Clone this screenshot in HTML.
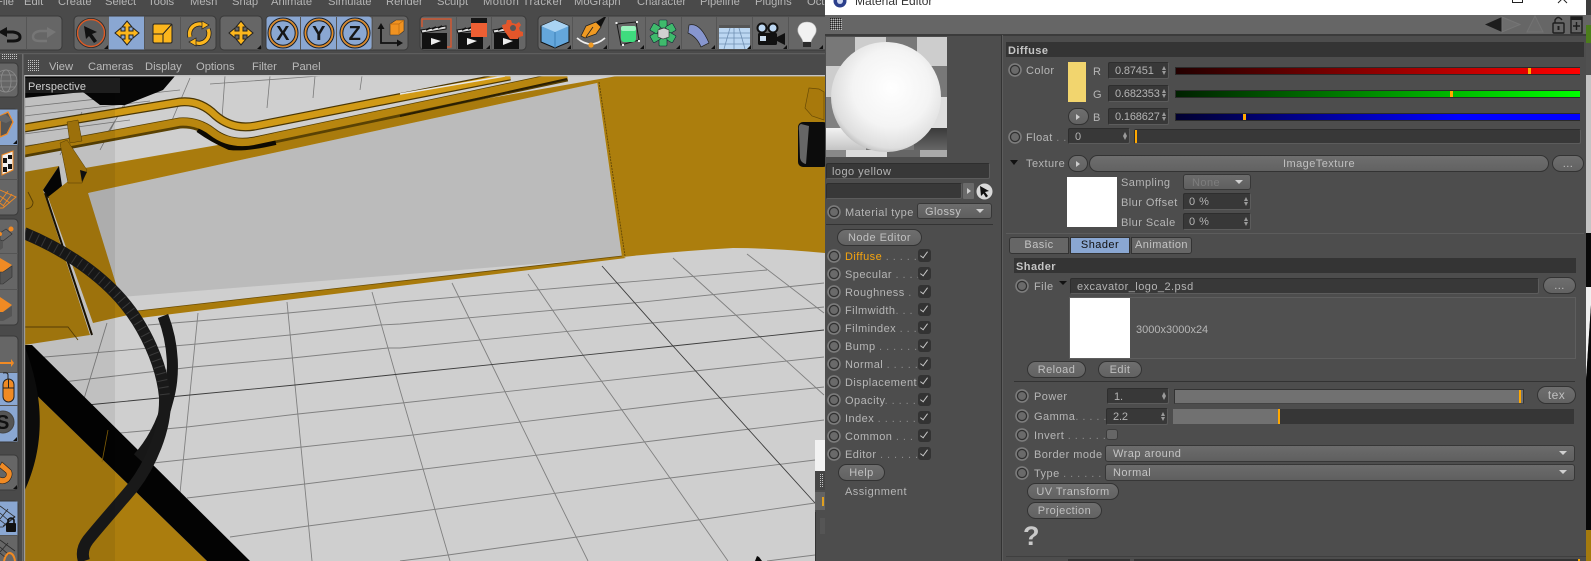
<!DOCTYPE html>
<html><head><meta charset="utf-8"><title>Material Editor</title>
<style>
html,body{margin:0;padding:0;width:1591px;height:561px;overflow:hidden;background:#4a4a4a}
body{position:relative;font:11px/16px "Liberation Sans",sans-serif;letter-spacing:.45px;color:#b6b6b6}
#stage{position:absolute;left:0;top:0}
#w{position:absolute;left:825px;top:0;width:761px;height:561px;background:#4d4d4d;overflow:hidden}
#w *{box-sizing:border-box}
#w>*{position:absolute}
.t{height:16px;line-height:18px;white-space:nowrap}
.f{background:#383838;border:1px solid #2e2e2e;border-bottom-color:#5c5c5c;border-right-color:#5c5c5c;border-radius:2px;padding-left:6px;line-height:16px;color:#b4b4b4;overflow:hidden}
.sp{letter-spacing:-.15px}
.sp::before,.sp::after{content:"";position:absolute;right:2px;border-left:2.500px solid transparent;border-right:2.500px solid transparent}
.sp::before{top:3px;border-bottom:4px solid #9a9a9a}
.sp::after{bottom:3px;border-top:4px solid #9a9a9a}
.b{background:linear-gradient(#6e6e6e,#626262);border:1px solid #333;border-radius:9px;text-align:center;color:#c0c0c0;line-height:17px}
.d{background:linear-gradient(#6c6c6c,#5f5f5f);border:1px solid #373737;border-radius:3px;padding-left:7px;line-height:16px;color:#c4c4c4}
.d::after{content:"";position:absolute;right:7px;top:5px;border-left:4px solid transparent;border-right:4px solid transparent;border-top:4px solid #d0d0d0}
.c{width:14px;height:14px;border-radius:50%;background:radial-gradient(circle,#6a6a6a 0 3.6px,#303030 4.2px 4.9px,#7c7c7c 5.4px 6.6px,transparent 7px)}
.k{width:13px;height:13px;background:#333;border-radius:3px}
.k::after{content:"";position:absolute;box-sizing:content-box;left:4px;top:1px;width:3px;height:7px;border-right:1.500px solid #c8c8c8;border-bottom:1.500px solid #c8c8c8;transform:rotate(36deg)}
.h{background:#343434;color:#c6c6c6;font-weight:bold;padding-left:2px;line-height:19px;height:15px;overflow:hidden}
.o{background:#ffa800}
</style></head><body>
<svg id="stage" width="1591" height="561" viewBox="0 0 1591 561" xmlns="http://www.w3.org/2000/svg" font-family="Liberation Sans, sans-serif">
<defs>
<pattern id="dots" width="2" height="2" patternUnits="userSpaceOnUse"><rect width="1" height="1" fill="#c4c4c4"/></pattern>
</defs>
<rect width="1591" height="561" fill="#4a4a4a"/>

<!-- VIEWPORT -->
<svg x="24" y="75" width="801" height="486" viewBox="24 75 801 486">
<rect x="24" y="75" width="801" height="486" fill="#cfcfcf"/>
<!-- top-left grid -->
<g stroke="#7a7a7a" stroke-width=".8" fill="none">
<path d="M24 107L180 90M24 116L150 101M24 134L130 120M24 146L70 140M210 84L320 76"/>
<path d="M100 150L124 104M60 155L82 112M170 125L190 78M103 140L125 105M222 118L225 76M267 108L270 76M313 98L315 76M360 90L362 76"/>
</g>
<path d="M24 76H175L163 90L125 105H100L83 92L24 98Z" fill="#060606"/>
<!-- floor grid -->
<g fill="none" stroke="#808080" stroke-width=".9">
<path d="M148 325L198 321L288 313L372 305L400 302L617 283L767 270"/>
<path d="M33 358L197 344L290 335L380 325L400 324L633 303L824 283"/>
<path d="M63 382L193 367L292 358L388 348L400 348L652 323L824 307"/>
<path d="M120 433L187 427L298 414L402 403L695 371L824 357"/>
<path d="M153 463L302 447L413 435L720 398L824 387"/>
<path d="M187 498L305 484L400 472L750 429L824 420"/>
<path d="M230 537L308 526L400 514L670 478L815 460"/>
<path d="M400 561L448 555L577 537L698 520L815 503"/>
<path d="M767 561L815 555"/>
<path d="M528 274L583 355L670 478L728 561"/>
<path d="M452 283L492 365L555 494L588 561"/>
<path d="M372 292L400 390L450 561"/>
<path d="M287 302L312 561"/>
<path d="M198 313L180 493"/>
<path d="M107 323L83 402"/>
<path d="M673 258L760 337L824 395"/>
<path d="M747 254L824 313"/>
<path d="M87 405L190 395L295 385L400 374L673 346L824 330" stroke="#3c3c3c"/>
<path d="M602 266L673 346L815 503" stroke="#3c3c3c"/>
</g>
<!-- lower black and gold -->
<path d="M24 383L207 561H24Z" fill="#ab7d0e"/>
<path d="M24 345H32L250 561H207L24 383Z" fill="#030303"/>
<path d="M24 345C44 395 46 445 24 492Z" fill="#0d0d0d"/>
<path d="M102 462L108 430" stroke="#8a6508" stroke-width=".8"/>
<!-- left bracket -->
<path d="M24 172L59 166L43 190L90 335L24 345Z" fill="#ab7d0e"/>
<path d="M48 197L88 190L120 297L137 313L93 323Z" fill="#a97b0d"/>
<path d="M59 166L43 190L48 198L62 186Z" fill="#060606"/>
<path d="M45 193L92 335" stroke="#1a1203" stroke-width="2" fill="none"/>
<path d="M24 327H68L78 340" stroke="#5c4206" stroke-width=".9" fill="none"/>
<path d="M28 192L33 202Q33 208 26 209" stroke="#5c4206" fill="none" stroke-width=".9"/>
<!-- gray panel -->
<path d="M88 193L597 83L622 257L120 297Z" fill="#bbb"/>
<!-- beam -->
<path d="M48 197L85 168L623 75L597 83L88 193Z" fill="#a97b0d"/>
<!-- lower strip -->
<path d="M137 311L622 256L626 258L140 318Z" fill="#a97b0c"/>
<path d="M137 311L622 256" stroke="#6a4c05" stroke-width=".8"/>
<!-- gold body right -->
<path d="M597 81L623 75H825V253Q770 248 733 248Q680 251 622 257Z" fill="#ac7e0d"/>
<path d="M599 82L625 256" stroke="#5a4105" stroke-width=".8" stroke-dasharray="2 1" fill="none"/>
<!-- pipes -->
<g fill="none">
<path d="M24 128L180 102Q200 100 215 115Q232 130 255 126L510 76" stroke="#4a3603" stroke-width="9"/>
<path d="M24 128L180 102Q200 100 215 115Q232 130 255 126L510 76" stroke="#d19a16" stroke-width="6.500"/>
<path d="M24 152L180 123Q198 122 212 133Q230 147 255 142L567 76" stroke="#5a4204" stroke-width="11"/>
<path d="M200 127Q214 137 230 144Q245 146 275 139" stroke="#0e0a02" stroke-width="12"/>
<path d="M24 151L180 122Q198 121 212 132Q230 146 255 141L567 75" stroke="#b8860f" stroke-width="7.500"/>
<path d="M400 94L505 76" stroke="#e8e8e8" stroke-width="1.400"/>
<path d="M400 116L567 79" stroke="#2a1f03" stroke-width="2"/>
</g>
<path d="M67 122L78 120L82 141L70 143Z" fill="#a8790c" stroke="#5a4105" stroke-width=".5"/>
<path d="M60 143L67 140L87 170L82 183L68 183Z" fill="#a8790c" stroke="#5a4105" stroke-width=".5"/>
<path d="M80 170L87 172L82 182Z" fill="#111"/>
<!-- cables -->
<g fill="none" stroke-linecap="butt">
<path d="M163 316C174 345 175 375 168 400C162 425 150 445 138 458" stroke="#171717" stroke-width="11"/>
<path d="M24 233C60 248 95 270 120 298C145 326 162 365 165 397C166 430 150 465 133 487C118 505 100 525 88 540C82 548 82 555 84 561" stroke="#191919" stroke-width="12"/>
<path d="M24 233C60 248 95 270 120 298C145 326 162 365 165 397" stroke="#3a3a3a" stroke-width="10" stroke-dasharray="1 6"/>
</g>
<!-- shaded band -->
<rect x="24" y="75" width="91" height="486" fill="#000" opacity=".07"/>
<!-- device top right -->
<path d="M809 88L819 89L824 92V120L812 116L805 108Z" fill="#a8790c" stroke="#6a4c05" stroke-width=".7"/>
<rect x="798" y="122" width="30" height="45" rx="5" fill="#0c0c0c"/>
<path d="M801 124Q798 125 799 131L800 158Q801 163 806 164L809 126Z" fill="#666"/>
<path d="M755 561L757 556L759 557L762 561Z" fill="#0a0a0a"/>
<!-- window behind -->
<rect x="815" y="440" width="10" height="31" fill="#f2f2f2"/>
<rect x="815" y="471" width="10" height="19" fill="#454545"/>
<rect x="820" y="474" width="4" height="13" fill="url(#dots)"/>
<rect x="815" y="490" width="10" height="71" fill="#4d4d4d"/>
<rect x="815" y="492" width="10" height="18" fill="#636363"/>
<rect x="822" y="497" width="2" height="9" fill="#e0a020"/>
<rect x="820" y="518" width="5" height="16" fill="#555"/>
<rect x="815" y="512" width="1" height="49" fill="#333"/>
<!-- perspective label -->
<rect x="24" y="78" width="96" height="15" fill="#333" opacity=".55"/>
<rect x="24" y="75" width="801" height="1.400" fill="#c4c4c4"/>
<rect x="24" y="75" width="1.200" height="486" fill="#9a9a9a"/>
<text x="28" y="90" font-size="11" fill="#cfcfcf" letter-spacing=".05">Perspective</text>
</svg>

<!-- MENU -->
<g font-size="11.200" fill="#b5b5b5" letter-spacing="0">
<text x="-4" y="5">File</text><text x="24" y="5">Edit</text><text x="58" y="5">Create</text><text x="105" y="5">Select</text><text x="148" y="5">Tools</text><text x="190" y="5">Mesh</text><text x="232" y="5">Snap</text><text x="271" y="5">Animate</text><text x="328" y="5">Simulate</text><text x="386" y="5">Render</text><text x="437" y="5">Sculpt</text><text x="483" y="5" letter-spacing=".45">Motion Tracker</text><text x="574" y="5">MoGraph</text><text x="637" y="5">Character</text><text x="700" y="5">Pipeline</text><text x="755" y="5">Plugins</text><text x="807" y="5">Oct</text>
</g>
<!-- SUBMENU -->
<rect x="0" y="53" width="825" height="1.200" fill="#5e5e5e"/>
<rect x="22" y="54" width="1.500" height="507" fill="#6d6d6d"/>
<rect x="28" y="59" width="12" height="13" fill="url(#dots)"/>
<rect x="2" y="54" width="15" height="5" fill="url(#dots)"/>
<g font-size="11.200" fill="#b9b9b9" letter-spacing="0">
<text x="49" y="70">View</text><text x="88" y="70">Cameras</text><text x="145" y="70">Display</text><text x="196" y="70">Options</text><text x="252" y="70">Filter</text><text x="292" y="70">Panel</text>
</g>

<!-- TOP TOOLBAR -->
<g stroke="#393939" fill="#666">
<rect x="-6" y="16" width="68" height="34" rx="4"/>
<rect x="74" y="16" width="142" height="34" rx="4"/>
<rect x="220" y="16" width="42" height="34" rx="4"/>
<rect x="266" y="16" width="142" height="34" rx="4"/>
<rect x="420" y="16" width="106" height="34" rx="4"/>
<rect x="538" y="16" width="300" height="34" rx="4"/>
</g>
<rect x="109" y="16.500" width="35" height="33" fill="#8aa7d2"/>
<rect x="266.500" y="16.500" width="105" height="33" rx="3" fill="#8aa7d2"/>
<g stroke="#555" stroke-width="1"><path d="M26.500 17V50M144.500 17V50M180.500 17V50M300.500 17V50M336.500 17V50M372.500 17V50M456.500 17V50M491.500 17V50M572.500 17V50M608.500 17V50M645.500 17V50M681.500 17V50M716.500 17V50M752.500 17V50M788.500 17V50"/></g>
<!-- undo redo -->
<path d="M2 32H13Q20 33 20 37Q20 41 13 41H7" fill="none" stroke="#111" stroke-width="3"/>
<path d="M-2 32L7 27V37Z" fill="#111" />
<path d="M52 31H40Q33 32 33 37Q33 41 40 41H47" fill="none" stroke="#767676" stroke-width="2.400"/>
<path d="M56 32L47 27V38Z" fill="#767676"/>
<!-- arrow select -->
<circle cx="91" cy="33" r="13.500" fill="#5d5d5d" stroke="#e05a23" stroke-width="1.400"/>
<circle cx="91" cy="33" r="14.600" fill="none" stroke="#2a2a2a" stroke-width=".8"/>
<path d="M84 26L97 32L92 34L97 41L94 43L89 36L86 39Z" fill="#111"/>
<!-- move icon generator -->
<g id="mv" fill="#fcb61c" stroke="#222" stroke-width="1">
<path d="M127 21L132 27H129V31H133V28L139 33L133 38V35H129V39H132L127 45L122 39H125V35H121V38L115 33L121 28V31H125V27H122Z"/>
</g>
<use href="#mv" x="114"/>
<!-- scale -->
<rect x="153" y="24" width="19" height="19" rx="1.500" fill="#fcb61c" stroke="#222"/>
<path d="M153 34H163V43M163 34L172 24" fill="none" stroke="#222"/>
<!-- rotate -->
<g fill="none" stroke="#222" stroke-width="5"><path d="M190 37A10 10 0 0 1 204 25"/><path d="M208 29A10 10 0 0 1 194 42"/></g>
<g fill="none" stroke="#fcb61c" stroke-width="3.400"><path d="M190 37A10 10 0 0 1 204 25"/><path d="M208 29A10 10 0 0 1 194 42"/></g>
<path d="M202 21L209 25L202 29Z M196 38V46L189 42Z" fill="#fcb61c" stroke="#222" stroke-width=".7"/>
<!-- XYZ -->
<g fill="none" stroke="#e38a21" stroke-width="1.600"><circle cx="283" cy="33" r="13.500"/><circle cx="319" cy="33" r="13.500"/><circle cx="355" cy="33" r="13.500"/></g>
<g fill="none" stroke="#1d1d1d" stroke-width="1"><circle cx="283" cy="33" r="15"/><circle cx="319" cy="33" r="15"/><circle cx="355" cy="33" r="15"/><circle cx="283" cy="33" r="12.200"/><circle cx="319" cy="33" r="12.200"/><circle cx="355" cy="33" r="12.200"/></g>
<g font-size="20" font-weight="bold" fill="#161616" text-anchor="middle"><text x="283" y="40">X</text><text x="319" y="40">Y</text><text x="355" y="40">Z</text></g>
<!-- coord -->
<path d="M381 28V43H400" fill="none" stroke="#111" stroke-width="1.800"/>
<path d="M381 23L377.500 29H384.500Z M403 43L397 39.500V46.500Z" fill="#111"/>
<path d="M390 24L396 20H404V31L399 35H390Z" fill="#f09220" stroke="#333" stroke-width=".6"/>
<path d="M390 24H399V35M399 24L404 20" fill="none" stroke="#b96a10" stroke-width=".7"/>
<!-- clapper icons -->
<g id="cl"><rect x="422" y="33" width="25" height="16" fill="#111"/><path d="M422 33L446 29V26L421 30Z" fill="#ddd" stroke="#111" stroke-width="1"/><path d="M426 30L430 28M432 29L436 27M438 28L442 26" stroke="#111" stroke-width="1.600"/><path d="M431 38L441 41L431 45Z" fill="#eee"/></g>
<path d="M422 27V19H451V47H447" fill="none" stroke="#e4562a" stroke-width="1.300"/>
<use href="#cl" x="36"/><use href="#cl" x="72"/>
<rect x="471" y="18" width="16" height="19" fill="#ee5f33"/><rect x="471" y="18" width="16" height="5" fill="#161616"/>
<path d="M503 29l-1-4 4-1 1-4h4l1 3 4 1 3-2 2 3-2 3 1 3 3 1v4l-4 1-1 2-8 0z" fill="#e4562a"/>
<circle cx="513" cy="28" r="3" fill="#555"/>
<!-- cube -->
<path d="M555 20L569 26V42L555 48L541 42V26Z" fill="#64a7dc" stroke="#111"/>
<path d="M541 26L555 32L569 26L555 20Z" fill="#a9d3f3"/>
<path d="M555 32V48" stroke="#3d7fb6"/>
<!-- pen -->
<path d="M581 36L586 26L596 22L601 27L596 34L585 38Z" fill="#f09a22" stroke="#222" stroke-width=".8"/>
<path d="M596 22L604 17H606L601 27Z" fill="#111"/>
<path d="M586 37L593 27" stroke="#222" stroke-width=".8"/>
<path d="M577 38Q591 50 605 38" fill="none" stroke="#eee" stroke-width="1.800"/>
<circle cx="591" cy="45" r="2.600" fill="#f09a22"/>
<!-- green cube -->
<path d="M617 24L636 22L639 40L621 45Z" fill="none" stroke="#1a1a1a"/>
<rect x="621" y="26" width="15" height="16" rx="3" fill="#3fdc7e"/>
<rect x="621" y="26" width="15" height="5" rx="2" fill="#9af2bc"/>
<g fill="#eee"><rect x="615.500" y="22" width="2" height="2"/><rect x="636" y="21" width="2" height="2"/><rect x="638" y="40" width="2" height="2"/><rect x="622" y="44" width="2" height="2"/></g>
<!-- cloner -->
<g fill="#3fba6c" stroke="#123" stroke-width=".6">
<rect x="659" y="20" width="8" height="8" rx="1"/>
<rect x="659" y="20" width="8" height="8" rx="1" transform="rotate(60 663 33)"/>
<rect x="659" y="20" width="8" height="8" rx="1" transform="rotate(120 663 33)"/>
<rect x="659" y="20" width="8" height="8" rx="1" transform="rotate(180 663 33)"/>
<rect x="659" y="20" width="8" height="8" rx="1" transform="rotate(240 663 33)"/>
<rect x="659" y="20" width="8" height="8" rx="1" transform="rotate(300 663 33)"/>
</g>
<path d="M658 30L664 28L669 30V37L663 39L658 37Z" fill="#d0d0d0" stroke="#333" stroke-width=".6"/>
<!-- deformer -->
<path d="M689 25Q700 22 709 43L701 47Q697 37 688 33Z" fill="#8796cf" stroke="#222" stroke-width=".7"/>
<!-- floor -->
<rect x="719" y="25" width="31" height="24" fill="#bcd7f2"/>
<rect x="719" y="25" width="31" height="3" fill="#555"/>
<g stroke="#6f8fb2" fill="none" stroke-width=".8"><path d="M719 33H750M719 38H750M719 44H750M730 28L724 49M739 28L745 49M734 28V49"/></g>
<!-- camera -->
<rect x="758" y="33" width="19" height="12" rx="1.500" fill="#111"/>
<path d="M777 37L785 33V45L777 41Z" fill="#111"/>
<circle cx="762" cy="28" r="4.500" fill="#bcd7f2" stroke="#111" stroke-width="2"/><circle cx="773" cy="28" r="4.500" fill="#bcd7f2" stroke="#111" stroke-width="2"/>
<rect x="760" y="36" width="6" height="5" fill="#cde"/>
<!-- light -->
<path d="M807 22C814 22 817 27 816 32C815 36 812 37 811 42H803C802 37 799 36 798 32C797 27 800 22 807 22Z" fill="#f2f2f2" stroke="#bbb" stroke-width=".6"/>
<rect x="803" y="42" width="8" height="5" fill="#2b2b2b"/>
<!-- corner ticks -->
<g fill="#111"><path d="M108 49V45L104 49Z M261 49V45L257 49Z M490 49V45L486 49Z M571 49V45L567 49Z M607 49V45L603 49Z M644 49V45L640 49Z M680 49V45L676 49Z M715 49V45L711 49Z M751 49V45L747 49Z M787 49V45L783 49Z M823 49V45L819 49Z"/></g>

<!-- LEFT TOOLBAR -->
<g stroke="#393939" fill="#666">
<rect x="-6" y="63" width="24" height="34" rx="4"/>
<rect x="-6" y="109" width="24" height="106" rx="4"/>
<rect x="-6" y="219" width="24" height="106" rx="4"/>
<rect x="-6" y="336" width="24" height="106" rx="4"/>
<rect x="-6" y="455" width="24" height="35" rx="4"/>
<rect x="-6" y="501" width="24" height="70" rx="4"/>
</g>
<rect x="0" y="109.500" width="17.500" height="36" fill="#8aa7d2"/>
<rect x="0" y="372" width="17.500" height="69.500" fill="#8aa7d2"/>
<rect x="0" y="501.500" width="17.500" height="34" fill="#8aa7d2"/>
<g stroke="#555"><path d="M0 145.500H18M0 179.500H18M0 253.500H18M0 289.500H18M0 372.500H18M0 405.500H18M0 535.500H18"/></g>
<!-- wire sphere -->
<g fill="none" stroke="#8c8c8c" stroke-width=".8"><circle cx="6" cy="81" r="11"/><ellipse cx="6" cy="81" rx="5" ry="11"/><path d="M-5 81H17M-3 75H15M-3 87H15"/></g>
<!-- cube orange -->
<path d="M0 116L8 112L13 122L7 134L0 137Z" fill="#555" stroke="#f08a24" stroke-width="1.300"/>
<path d="M0 121L6 123L12 120L5 114L0 116Z" fill="#666"/>
<path d="M17 144V140L13 144Z" fill="#111"/>
<path d="M2 155L13 151V170L2 175Z" fill="#eee" stroke="#f08a24"/>
<g fill="#111"><rect x="3" y="158" width="4" height="5"/><rect x="8" y="164" width="4" height="5"/><rect x="8" y="155" width="4" height="4"/><rect x="3" y="167" width="4" height="5"/></g>
<g fill="none" stroke="#f08a24" stroke-width=".9"><path d="M0 190L16 197L3 208H0M0 196L10 203M0 203L5 207M0 202L8 191M3 206L12 194"/></g>
<path d="M0 233L6 229L12 234L3 241L0 240Z" fill="#666" stroke="#333" stroke-width=".7"/>
<path d="M0 241L3 241V248L0 250Z" fill="#555"/>
<circle cx="11" cy="229" r="2.500" fill="#f08a24"/><circle cx="0" cy="234" r="2" fill="#f08a24"/>
<path d="M0 258L12 265L3 272H0Z" fill="#f08a24"/><path d="M0 272H3L12 266V277L3 284H0Z" fill="#555" stroke="#333" stroke-width=".6"/>
<path d="M0 297L12 305L3 312H0Z" fill="#f08a24"/><path d="M0 312H3L12 306V316L3 321H0Z" fill="#555"/>
<path d="M0 362H11V359L14 363L11 367V364H0Z" fill="#f08a24"/>
<rect x="3" y="379" width="11" height="23" rx="5.500" fill="#f08a24" stroke="#222"/>
<path d="M3 388H14M8.500 379V388" stroke="#222" fill="none"/><path d="M8 379V375Q8 372 3 373" fill="none" stroke="#222"/>
<circle cx="3" cy="422" r="11" fill="#555" stroke="#444"/>
<text x="-4" y="429" font-size="20" font-weight="bold" fill="#111">S</text>
<path d="M17 441V437L13 441Z M17 489V485L13 489Z" fill="#111"/>
<path d="M2 462L11 470Q14 475 9 481Q3 486 -3 482L0 477Q4 479 6 476Q7 473 5 472L-1 467Z" fill="#f08a24" stroke="#222" stroke-width=".6"/>
<g fill="none" stroke="#2a2a2a" stroke-width=".8"><path d="M0 506L15 517L3 527H0M0 513L9 521M0 520L5 524M0 519L8 509M3 526L15 516"/></g>
<rect x="6" y="523" width="10" height="9" rx="1" fill="#111"/><path d="M8 523V520Q11 516 14 520V523" fill="none" stroke="#111" stroke-width="1.600"/>
<g fill="none" stroke="#2a2a2a" stroke-width=".8"><path d="M0 540L15 551M0 547L9 555M0 553L6 558M8 543L0 552"/></g>
<path d="M4 561Q6 553 10 553Q14 554 15 561" fill="none" stroke="#f08a24" stroke-width="2"/>

<!-- RIGHT STRIP -->
<rect x="1586" y="0" width="5" height="15" fill="#3d3d3d"/>
<rect x="1586" y="15" width="5" height="10" fill="#666"/>
<rect x="1586" y="25" width="5" height="18" fill="#4c7d1c"/>
<rect x="1586" y="43" width="5" height="32" fill="#505050"/>
<rect x="1586" y="75" width="5" height="158" fill="#c4c4c4"/>
<rect x="1586" y="233" width="5" height="54" fill="#0a0a0a"/>
<path d="M1586 287H1591V305L1586 380Z" fill="#f0f0f0"/>
<path d="M1586 380L1591 305V530H1586Z" fill="#080808"/>
<rect x="1586" y="530" width="5" height="31" fill="#a47a0e"/>
</svg>

<!-- MATERIAL EDITOR -->
<div id="w">
<div style="left:0;top:0;width:761px;height:15px;background:#fff"></div>
<svg style="left:7px;top:-6px" width="16" height="14"><circle cx="8" cy="7" r="6.500" fill="#2b3f8c"/><circle cx="8" cy="7" r="3" fill="#cdd6ee"/></svg>
<div class="t" style="left:30px;top:-8px;color:#333;font-size:12px;letter-spacing:0">Material Editor</div>
<div style="left:687px;top:-4px;width:11px;height:7px;border:1.500px solid #222"></div>
<svg style="left:732px;top:0" width="12" height="5"><path d="M1-6L10 3M10-6L1 3" stroke="#222" stroke-width="1"/></svg>

<div style="left:0;top:15px;width:761px;height:19px;background:#666"></div>
<div style="left:0;top:34px;width:761px;height:1.500px;background:#3b3b3b"></div>
<svg style="left:5px;top:18px" width="12" height="12"><pattern id="d2" width="2" height="2" patternUnits="userSpaceOnUse"><rect width="1" height="1" fill="#222"/><rect x="1" y="1" width="1" height="1" fill="#bbb"/></pattern><rect width="12" height="12" fill="url(#d2)"/></svg>
<svg style="left:655px;top:15px" width="106" height="19">
<path d="M5 9.500L22 2V17Z" fill="#1d1d1d"/><path d="M22 2L40 9.500L22 17Z" fill="#6d6d6d" stroke="#757575"/>
<path d="M55 1L63 17H47Z" fill="#6a6a6a" stroke="#737373"/>
<rect x="73" y="8" width="11" height="10" rx="1" fill="none" stroke="#1d1d1d" stroke-width="1.400"/><path d="M75 8V5Q78 0 82 5" fill="none" stroke="#1d1d1d" stroke-width="1.400"/><rect x="77.500" y="11" width="2" height="4" fill="#1d1d1d"/>
<rect x="91" y="2" width="11" height="16" fill="none" stroke="#1d1d1d" stroke-width="1.400"/><rect x="91" y="2" width="11" height="3" fill="#1d1d1d"/><path d="M96.500 7V15M93 11H100" stroke="#1d1d1d" stroke-width="1.400"/>
</svg>
<div style="left:176px;top:35px;width:1px;height:526px;background:#333"></div>
<div style="left:177px;top:35px;width:1px;height:526px;background:#5c5c5c"></div>

<!-- preview -->
<svg style="left:1px;top:37px" width="121" height="120">
<defs><radialGradient id="s" cx=".55" cy=".42" r=".64"><stop offset="0" stop-color="#fff"/><stop offset=".55" stop-color="#f4f4f4"/><stop offset=".85" stop-color="#dedede"/><stop offset="1" stop-color="#acacac"/></radialGradient>
<linearGradient id="fl" x1="0" y1="0" x2="0" y2="1"><stop offset="0" stop-color="#f2f2f2"/><stop offset="1" stop-color="#c4c4c4"/></linearGradient>
<linearGradient id="fr" x1="0" y1="0" x2="0" y2="1"><stop offset="0" stop-color="#3a3a3a"/><stop offset="1" stop-color="#666"/></linearGradient></defs>
<rect width="121" height="120" fill="#787878"/>
<rect x="29" width="31" height="29" fill="#cdcdcd"/><rect x="91" width="30" height="29" fill="#cdcdcd"/>
<rect y="29" width="29" height="31" fill="#cdcdcd"/><rect x="60" y="29" width="31" height="31" fill="#cdcdcd"/>
<rect x="91" y="60" width="30" height="31" fill="#dedede"/><rect y="60" width="29" height="31" fill="#808080"/>
<rect y="91" width="40" height="22" fill="url(#fl)"/><rect x="88" y="91" width="33" height="22" fill="url(#fr)"/>
<rect y="113" width="20" height="7" fill="#888"/><rect x="20" y="113" width="41" height="7" fill="#dcdcdc"/><rect x="61" y="113" width="33" height="7" fill="#666"/><rect x="94" y="113" width="27" height="7" fill="#aaa"/>
<circle cx="60" cy="60" r="55" fill="url(#s)"/>
</svg>

<div class="f" style="left:1px;top:163px;width:164px;height:16px;padding-left:5px;line-height:17px">logo yellow</div>
<div class="f" style="left:1px;top:183px;width:136px;height:16px"></div>
<div style="left:138px;top:183px;width:11px;height:16px;background:#6a6a6a;border-radius:1px"></div>
<svg style="left:141px;top:187px" width="6" height="8"><path d="M1 1L5 4L1 7Z" fill="#ccc"/></svg>
<svg style="left:151px;top:183px" width="17" height="17"><circle cx="8.500" cy="8.500" r="8" fill="#d9d9d9"/><path d="M4 3L13 8L9 9L12 13L10 14.500L7.500 10.500L5 13Z" fill="#111"/></svg>

<div class="c" style="left:2px;top:205px"></div>
<div class="t" style="left:20px;top:204px">Material type</div>
<div class="d" style="left:92px;top:203px;width:75px;height:16px">Glossy</div>
<div style="left:1px;top:224px;width:167px;height:1px;background:#333"></div>
<div class="b" style="left:12px;top:229px;width:85px;height:17px">Node Editor</div>

<div class="c" style="left:2px;top:249px"></div><div class="t" style="left:20px;top:248px;color:#f5a40f">Diffuse<span style="color:#8c8c8c"> . . . . .</span></div><div class="k" style="left:93px;top:249px"></div>
<div class="c" style="left:2px;top:267px"></div><div class="t" style="left:20px;top:266px">Specular<span style="color:#8c8c8c"> . . . .</span></div><div class="k" style="left:93px;top:267px"></div>
<div class="c" style="left:2px;top:285px"></div><div class="t" style="left:20px;top:284px">Roughness<span style="color:#8c8c8c"> .</span></div><div class="k" style="left:93px;top:285px"></div>
<div class="c" style="left:2px;top:303px"></div><div class="t" style="left:20px;top:302px">Filmwidth<span style="color:#8c8c8c">. . .</span></div><div class="k" style="left:93px;top:303px"></div>
<div class="c" style="left:2px;top:321px"></div><div class="t" style="left:20px;top:320px">Filmindex<span style="color:#8c8c8c"> . . .</span></div><div class="k" style="left:93px;top:321px"></div>
<div class="c" style="left:2px;top:339px"></div><div class="t" style="left:20px;top:338px">Bump<span style="color:#8c8c8c"> . . . . . .</span></div><div class="k" style="left:93px;top:339px"></div>
<div class="c" style="left:2px;top:357px"></div><div class="t" style="left:20px;top:356px">Normal<span style="color:#8c8c8c"> . . . . .</span></div><div class="k" style="left:93px;top:357px"></div>
<div class="c" style="left:2px;top:375px"></div><div class="t" style="left:20px;top:374px">Displacement</div><div class="k" style="left:93px;top:375px"></div>
<div class="c" style="left:2px;top:393px"></div><div class="t" style="left:20px;top:392px">Opacity<span style="color:#8c8c8c">. . . . .</span></div><div class="k" style="left:93px;top:393px"></div>
<div class="c" style="left:2px;top:411px"></div><div class="t" style="left:20px;top:410px">Index<span style="color:#8c8c8c"> . . . . . .</span></div><div class="k" style="left:93px;top:411px"></div>
<div class="c" style="left:2px;top:429px"></div><div class="t" style="left:20px;top:428px">Common<span style="color:#8c8c8c"> . . .</span></div><div class="k" style="left:93px;top:429px"></div>
<div class="c" style="left:2px;top:447px"></div><div class="t" style="left:20px;top:446px">Editor<span style="color:#8c8c8c"> . . . . . .</span></div><div class="k" style="left:93px;top:447px"></div>
<div class="b" style="left:13px;top:464px;width:47px;height:17px">Help</div>
<div class="t" style="left:20px;top:483px">Assignment</div>

<!-- Diffuse -->
<div class="h" style="left:181px;top:42px;width:578px">Diffuse</div>
<div class="c" style="left:183px;top:63px"></div>
<div class="t" style="left:201px;top:62px">Color</div>
<div style="left:243px;top:62px;width:18px;height:40px;background:#f2d56e"></div>
<div class="t" style="left:268px;top:63px">R</div><div class="f sp" style="left:283px;top:62px;width:61px;height:17px">0.87451</div>
<div class="t" style="left:268px;top:86px">G</div><div class="f sp" style="left:283px;top:85px;width:61px;height:17px">0.682353</div>
<div class="b" style="left:243px;top:108px;width:21px;height:17px"></div>
<svg style="left:250px;top:113px" width="6" height="8"><path d="M1 1L5 4L1 7Z" fill="#ccc"/></svg>
<div class="t" style="left:268px;top:109px">B</div><div class="f sp" style="left:283px;top:108px;width:61px;height:17px">0.168627</div>
<div style="left:350px;top:67px;width:405px;height:7.500px;background:linear-gradient(90deg,#230000,#f00);border:1px solid #2a2a2a;border-right:0"></div>
<div class="o" style="left:703px;top:68px;width:3px;height:6px"></div>
<div style="left:350px;top:90px;width:405px;height:7.500px;background:linear-gradient(90deg,#002000,#0f0);border:1px solid #2a2a2a;border-right:0"></div>
<div class="o" style="left:625px;top:91px;width:3px;height:6px"></div>
<div style="left:350px;top:113px;width:405px;height:7.500px;background:linear-gradient(90deg,#000030,#00f 70%);border:1px solid #2a2a2a;border-right:0"></div>
<div class="o" style="left:418px;top:114px;width:3px;height:6px"></div>

<div class="c" style="left:183px;top:130px"></div>
<div class="t" style="left:201px;top:129px">Float<span style="color:#8c8c8c"> . .</span></div>
<div class="f sp" style="left:243px;top:128px;width:62px;height:16px">0</div>
<div class="f" style="left:309px;top:129px;width:447px;height:15px"></div>
<div class="o" style="left:310px;top:130px;width:2px;height:13px"></div>

<svg style="left:184px;top:160px" width="10" height="6"><path d="M1 0H9L5 5Z" fill="#111"/></svg>
<div class="t" style="left:201px;top:155px">Texture</div>
<div class="b" style="left:243px;top:155px;width:20px;height:17px"></div>
<svg style="left:250px;top:160px" width="6" height="8"><path d="M1 1L5 4L1 7Z" fill="#ccc"/></svg>
<div class="b" style="left:264px;top:155px;width:460px;height:17px">ImageTexture</div>
<div class="b" style="left:727px;top:155px;width:32px;height:17px">...</div>
<div style="left:242px;top:177px;width:50px;height:50px;background:#fff"></div>
<div class="t" style="left:296px;top:174px">Sampling</div>
<div class="d" style="left:358px;top:174px;width:68px;height:16px;color:#7d7d7d;padding-left:8px">None</div>
<div class="t" style="left:296px;top:194px">Blur Offset</div>
<div class="f sp" style="left:358px;top:193px;width:68px;height:17px;padding-left:5px;letter-spacing:.45px">0 %</div>
<div class="t" style="left:296px;top:214px">Blur Scale</div>
<div class="f sp" style="left:358px;top:213px;width:68px;height:17px;padding-left:5px;letter-spacing:.45px">0 %</div>
<div style="left:181px;top:233px;width:578px;height:1px;background:#5c5c5c"></div>

<!-- tabs -->
<div style="left:184px;top:237px;width:60px;height:17px;background:#666;border:1px solid #333;border-radius:3px 0 0 3px;text-align:center;line-height:15px;color:#c4c4c4">Basic</div>
<div style="left:245px;top:237px;width:60px;height:17px;background:#8aa7d2;border:1px solid #333;text-align:center;line-height:15px;color:#111">Shader</div>
<div style="left:306px;top:237px;width:61px;height:17px;background:#666;border:1px solid #333;border-radius:0 3px 3px 0;text-align:center;line-height:15px;color:#c4c4c4">Animation</div>

<div class="h" style="left:189px;top:258px;width:562px">Shader</div>
<div class="c" style="left:190px;top:279px"></div>
<div class="t" style="left:209px;top:278px">File</div>
<svg style="left:234px;top:281px" width="8" height="5"><path d="M0 0H8L4 4Z" fill="#111"/></svg>
<div class="f" style="left:245px;top:278px;width:469px;height:16px">excavator_logo_2.psd</div>
<div class="b" style="left:718px;top:277px;width:33px;height:17px">...</div>
<div style="left:244px;top:297px;width:507px;height:62px;border:1px solid #5e5e5e;background:#505050"></div>
<div style="left:245px;top:298px;width:60px;height:60px;background:#fff"></div>
<div class="t" style="left:311px;top:321px;letter-spacing:0">3000x3000x24</div>
<div class="b" style="left:202px;top:361px;width:59px;height:17px">Reload</div>
<div class="b" style="left:273px;top:361px;width:44px;height:17px">Edit</div>
<div style="left:189px;top:381px;width:561px;height:1px;background:#333"></div>

<div class="c" style="left:190px;top:389px"></div>
<div class="t" style="left:209px;top:388px">Power</div>
<div class="f sp" style="left:282px;top:388px;width:62px;height:16px">1.</div>
<div style="left:349px;top:389px;width:350px;height:15px;background:#717171;border:1px solid #333;border-bottom-color:#444"></div>
<div class="o" style="left:694px;top:390px;width:2px;height:13px"></div>
<div class="b" style="left:712px;top:386px;width:39px;height:18px;font-size:12px">tex</div>

<div class="c" style="left:190px;top:409px"></div>
<div class="t" style="left:209px;top:408px">Gamma<span style="color:#8c8c8c">. . . . .</span></div>
<div class="f sp" style="left:281px;top:408px;width:62px;height:17px">2.2</div>
<div style="left:348px;top:409px;width:401px;height:15px;background:#363636"></div>
<div style="left:348px;top:409px;width:105px;height:15px;background:#717171"></div>
<div class="o" style="left:453px;top:409px;width:2px;height:15px"></div>

<div class="c" style="left:190px;top:428px"></div>
<div class="t" style="left:209px;top:427px">Invert<span style="color:#8c8c8c"> . . . . . .</span></div>
<div style="left:281px;top:429px;width:12px;height:11px;background:#666;border:1px solid #3c3c3c;border-radius:3px"></div>

<div class="c" style="left:190px;top:447px"></div>
<div class="t" style="left:209px;top:446px">Border mode</div>
<div class="d" style="left:280px;top:445px;width:470px;height:17px">Wrap around</div>
<div class="c" style="left:190px;top:466px"></div>
<div class="t" style="left:209px;top:465px">Type<span style="color:#8c8c8c"> . . . . . . .</span></div>
<div class="d" style="left:280px;top:464px;width:470px;height:17px">Normal</div>
<div class="b" style="left:202px;top:483px;width:92px;height:17px">UV Transform</div>
<div class="b" style="left:202px;top:502px;width:75px;height:17px">Projection</div>
<div style="left:198px;top:523px;font:bold 27px/27px 'Liberation Sans',sans-serif;color:#c9c9c9;letter-spacing:0">?</div>

<div style="left:181px;top:556px;width:580px;height:1px;background:#3f3f3f"></div>
<div style="left:243px;top:559px;width:62px;height:2px;background:#333"></div>
<div style="left:309px;top:559px;width:446px;height:2px;background:#333"></div>
<div class="o" style="left:753px;top:559px;width:2px;height:2px"></div>
</div>
</body></html>
